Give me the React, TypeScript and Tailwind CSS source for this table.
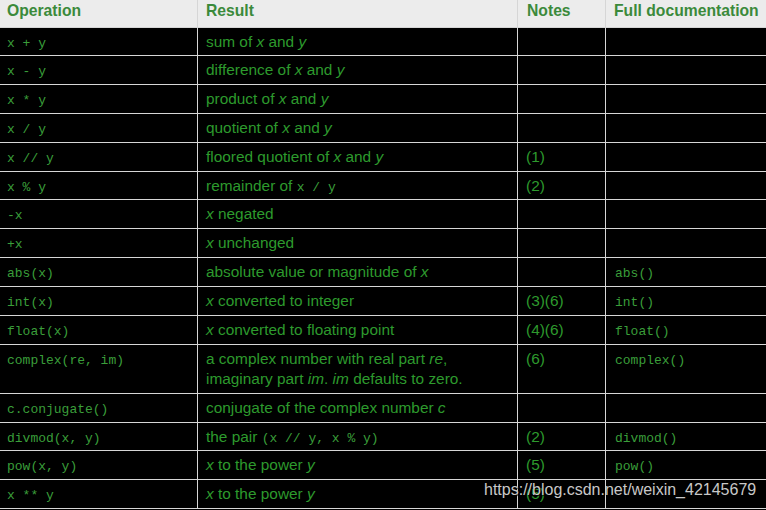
import React from "react";

const M = ({ children }: { children: React.ReactNode }) => (
  <span className="font-['Liberation_Mono',monospace] text-[13px] text-[#3a9e3a]">{children}</span>
);
const I = ({ children }: { children: React.ReactNode }) => <i>{children}</i>;

type Row = { h: string; op: string; res: React.ReactNode; note?: string; doc?: string };

const rows: Row[] = [
  { h: "h-[28px]", op: "x + y", res: <>sum of <I>x</I> and <I>y</I></> },
  { h: "h-[29px]", op: "x - y", res: <>difference of <I>x</I> and <I>y</I></> },
  { h: "h-[29px]", op: "x * y", res: <>product of <I>x</I> and <I>y</I></> },
  { h: "h-[29px]", op: "x / y", res: <>quotient of <I>x</I> and <I>y</I></> },
  { h: "h-[29px]", op: "x // y", res: <>floored quotient of <I>x</I> and <I>y</I></>, note: "(1)" },
  { h: "h-[28px]", op: "x % y", res: <>remainder of <M>x / y</M></>, note: "(2)" },
  { h: "h-[29px]", op: "-x", res: <><I>x</I> negated</> },
  { h: "h-[29px]", op: "+x", res: <><I>x</I> unchanged</> },
  { h: "h-[29px]", op: "abs(x)", res: <>absolute value or magnitude of <I>x</I></>, doc: "abs()" },
  { h: "h-[29px]", op: "int(x)", res: <><I>x</I> converted to integer</>, note: "(3)(6)", doc: "int()" },
  { h: "h-[29px]", op: "float(x)", res: <><I>x</I> converted to floating point</>, note: "(4)(6)", doc: "float()" },
  {
    h: "h-[49px]",
    op: "complex(re, im)",
    res: (
      <>
        a complex number with real part <I>re</I>,<br />imaginary part <I>im</I>. <I>im</I> defaults to zero.
      </>
    ),
    note: "(6)",
    doc: "complex()",
  },
  { h: "h-[29px]", op: "c.conjugate()", res: <>conjugate of the complex number <I>c</I></> },
  { h: "h-[28px]", op: "divmod(x, y)", res: <>the pair <M>(x // y, x % y)</M></>, note: "(2)", doc: "divmod()" },
  { h: "h-[29px]", op: "pow(x, y)", res: <><I>x</I> to the power <I>y</I></>, note: "(5)", doc: "pow()" },
  { h: "h-[29px]", op: "x ** y", res: <><I>x</I> to the power <I>y</I></>, note: "(5)" },
];

export default function App() {
  return (
    <div className="relative w-[766px] h-[510px] overflow-hidden bg-black font-['Liberation_Sans',Arial,sans-serif]">
      <div className="w-[900px]">
        <div className="flex h-[28px] bg-[#ececec] border-b border-[#d6d6d6] text-[15.7px] font-bold text-[#3b8a3b] leading-[20px]">
          <div className="w-[198px] shrink-0 border-r border-[#d6d6d6] pl-[7px] pt-[1px]">Operation</div>
          <div className="w-[320px] shrink-0 border-r border-[#d6d6d6] pl-[8px] pt-[1px]">Result</div>
          <div className="w-[88px] shrink-0 border-r border-[#d6d6d6] pl-[9px] pt-[1px]">Notes</div>
          <div className="flex-1 pl-[8px] pt-[1px]">Full documentation</div>
        </div>
        {rows.map((r, i) => (
          <div key={i} className={`flex ${r.h} border-b border-[#d6d6d6] text-[15.4px] leading-[20px] text-[#2d9a2d]`}>
            <div className="w-[198px] shrink-0 border-r border-[#d6d6d6] pl-[7px] pt-[4px]">
              <M>{r.op}</M>
            </div>
            <div className="w-[320px] shrink-0 border-r border-[#d6d6d6] pl-[8px] pt-[4px]">{r.res}</div>
            <div className="w-[88px] shrink-0 border-r border-[#d6d6d6] pl-[8px] pt-[4px]">{r.note}</div>
            <div className="flex-1 pl-[9px] pt-[4px]">{r.doc ? <M>{r.doc}</M> : null}</div>
          </div>
        ))}
      </div>
      <div className="absolute left-[484px] top-[480px] text-[16px] leading-[20px] text-[#c8c8c8] [text-shadow:1px_1px_1px_#000]">
        https://blog.csdn.net/weixin_42145679
      </div>
    </div>
  );
}
